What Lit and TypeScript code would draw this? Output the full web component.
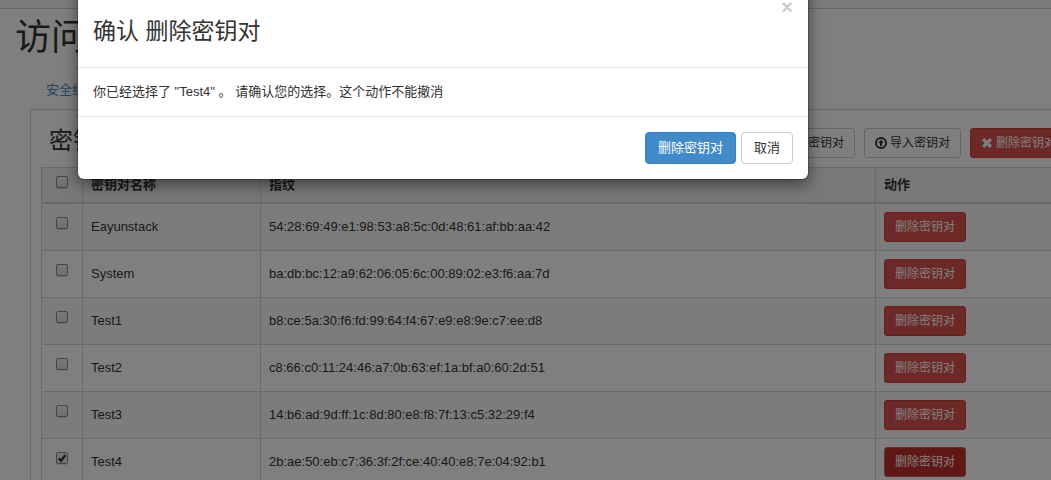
import { LitElement, html, css } from "lit";
import { customElement, state } from "lit/decorators.js";

interface KeyPair {
  name: string;
  fingerprint: string;
  selected: boolean;
}

@customElement("app-root")
export class AppRoot extends LitElement {
  static styles = css`
    :host {
      display: block;
      position: relative;
      height: 100vh;
      overflow: hidden;
      background: #fff;
      color: #333;
      font: 13px/18px "Liberation Sans", "Noto Sans CJK SC", sans-serif;
    }
    *, *::before, *::after { box-sizing: border-box; }
    .topbar { height: 9px; background: #f8f8f8; border-bottom: 1px solid #d0d0d0; }
    /* The key pair table is wider than the viewport and runs off its right edge. */
    .page { width: calc(100% + 52px); padding: 9px 15px 0; }
    h1, h2, h3 { font-weight: 400; margin: 0; }
    h1 { font-size: 36px; line-height: 40px; }
    .tabs { display: flex; margin: 14px 0 0 15px; padding: 0; list-style: none; }
    .tabs a { display: block; padding: 9px 15px 10px 16px; color: #428bca; text-decoration: none; }
    .tabs .current { color: #555; }
    .panel { margin-left: 15px; padding: 18px 10px 20px; border: 1px solid #d4d4d4; }
    .tablebar { display: flex; justify-content: space-between; padding: 0 10px 9px 8px; }
    h2 { font-size: 24px; line-height: 26px; }
    .actions { display: flex; gap: 9px; }
    button { font-family: inherit; color: #333; background: #fff; border: 1px solid #ccc; border-radius: 4px; white-space: nowrap; cursor: pointer; }
    .small { display: inline-flex; align-items: center; gap: 3px; height: 30px; padding: 0 10px; font-size: 12px; line-height: 18px; border-radius: 3px; }
    .small svg { width: 12px; height: 12px; fill: currentColor; }
    .danger { color: #fff; background: #d9534f; border-color: #d43f3a; }
    .danger.active { background: #c12e2a; border-color: #c9605c; }
    table { width: 100%; table-layout: fixed; border-collapse: collapse; border: 1px solid #d4d4d4; }
    th, td { border: 1px solid #d4d4d4; padding: 8px; height: 47px; text-align: left; vertical-align: middle; }
    th { height: 35px; background: #f1f1f1; border-bottom-width: 2px; }
    tbody tr:nth-child(odd) { background: #f9f9f9; }
    .pick { width: 41px; text-align: center; vertical-align: top; line-height: 12px; }
    td.pick { padding-top: 13px; }
    .name { width: 178px; }
    .do { width: 201px; }
    input {
      appearance: none; display: inline-block; width: 12px; height: 12px; margin: 0;
      border: 1px solid #8a8a8a; border-radius: 2px; background: linear-gradient(#f2f2f2, #dedede);
      box-shadow: 0 1px 1px #0002;
    }
    input:checked {
      background: url("data:image/svg+xml,%3Csvg xmlns='http://www.w3.org/2000/svg' viewBox='0 0 10 10'%3E%3Cpath d='M1.8 5.4 4.1 7.8 8.4 2' fill='none' stroke='%23333' stroke-width='2.3'/%3E%3C/svg%3E"), linear-gradient(#f2f2f2, #dedede);
    }
    .backdrop { position: absolute; inset: 0; padding: 0 243px 0 78px; background: rgba(0, 0, 0, 0.5); }
    .modal { margin-top: -20px; background: #fff; border-radius: 6px; box-shadow: 0 5px 15px rgba(0, 0, 0, 0.5), 0 0 0 1px rgba(0, 0, 0, 0.2); }
    .modal-head { display: flex; justify-content: space-between; align-items: flex-start; padding: 15px; border-bottom: 1px solid #e5e5e5; }
    .modal-head h3 { padding: 23px 0 8px; font-size: 23px; line-height: 26px; }
    .close { padding: 0; border: 0; background: none; color: #ccc; font-size: 20px; font-weight: 700; line-height: 24px; }
    .modal-body { padding: 15px; }
    .modal-body p { margin: 0; }
    .modal-foot { display: flex; justify-content: flex-end; gap: 5px; padding: 15px; border-top: 1px solid #e5e5e5; }
    .modal-foot button { padding: 6px 12px; font-size: 13px; line-height: 18px; }
    .modal-foot .primary { color: #fff; background: #428bca; border-color: #357ebd; }
  `;

  @state() private open = true;

  @state() private pairs: KeyPair[] = [
    { name: "Eayunstack", fingerprint: "54:28:69:49:e1:98:53:a8:5c:0d:48:61:af:bb:aa:42", selected: false },
    { name: "System", fingerprint: "ba:db:bc:12:a9:62:06:05:6c:00:89:02:e3:f6:aa:7d", selected: false },
    { name: "Test1", fingerprint: "b8:ce:5a:30:f6:fd:99:64:f4:67:e9:e8:9e:c7:ee:d8", selected: false },
    { name: "Test2", fingerprint: "c8:66:c0:11:24:46:a7:0b:63:ef:1a:bf:a0:60:2d:51", selected: false },
    { name: "Test3", fingerprint: "14:b6:ad:9d:ff:1c:8d:80:e8:f8:7f:13:c5:32:29:f4", selected: false },
    { name: "Test4", fingerprint: "2b:ae:50:eb:c7:36:3f:2f:ce:40:40:e8:7e:04:92:b1", selected: true },
  ];

  private close = () => { this.open = false; };

  render() {
    return html`
      <div class="topbar"></div>
      <main class="page">
        <h1>访问 &amp; 安全</h1>
        <ul class="tabs">
          <li><a href="#groups">安全组</a></li>
          <li><a class="current" href="#keypairs">密钥对</a></li>
        </ul>
        <section class="panel">
          <div class="tablebar">
            <h2>密钥对</h2>
            <div class="actions">
              <button class="small">
                <svg viewBox="0 0 12 12"><path d="M4.500 0h3v4.500H12v3H7.500V12h-3V7.500H0v-3h4.500z"/></svg>创建密钥对
              </button>
              <button class="small">
                <svg viewBox="0 0 12 12"><path fill-rule="evenodd" d="M6 0a6 6 0 1 0 0 12A6 6 0 0 0 6 0zm0 1.900a4.100 4.100 0 1 1 0 8.200 4.100 4.100 0 0 1 0-8.200zM6 2.700 3.200 5.900H5v3h2v-3h1.800z"/></svg>导入密钥对
              </button>
              <button class="small danger">
                <svg viewBox="0 0 12 12"><path d="M3.200 1 6 3.700 8.800 1 11 3.200 8.300 6 11 8.800 8.800 11 6 8.300 3.200 11 1 8.800 3.700 6 1 3.200z"/></svg>删除密钥对
              </button>
            </div>
          </div>
          <table>
            <thead>
              <tr>
                <th class="pick"><input type="checkbox" aria-label="全选" /></th>
                <th class="name">密钥对名称</th>
                <th>指纹</th>
                <th class="do">动作</th>
              </tr>
            </thead>
            <tbody>
              ${this.pairs.map((p) => html`
                <tr>
                  <td class="pick"><input type="checkbox" aria-label=${p.name} .checked=${p.selected} /></td>
                  <td>${p.name}</td>
                  <td>${p.fingerprint}</td>
                  <td><button class="small danger ${p.selected ? "active" : ""}">删除密钥对</button></td>
                </tr>`)}
            </tbody>
          </table>
        </section>
      </main>
      ${this.open ? html`
        <div class="backdrop">
          <div class="modal" role="dialog" aria-modal="true" aria-labelledby="title">
            <header class="modal-head">
              <h3 id="title">确认 删除密钥对</h3>
              <button class="close" aria-label="关闭" @click=${this.close}>×</button>
            </header>
            <div class="modal-body"><p>你已经选择了 "Test4" 。 请确认您的选择。这个动作不能撤消</p></div>
            <footer class="modal-foot">
              <button class="primary" @click=${this.close}>删除密钥对</button>
              <button @click=${this.close}>取消</button>
            </footer>
          </div>
        </div>` : ""}
    `;
  }
}
